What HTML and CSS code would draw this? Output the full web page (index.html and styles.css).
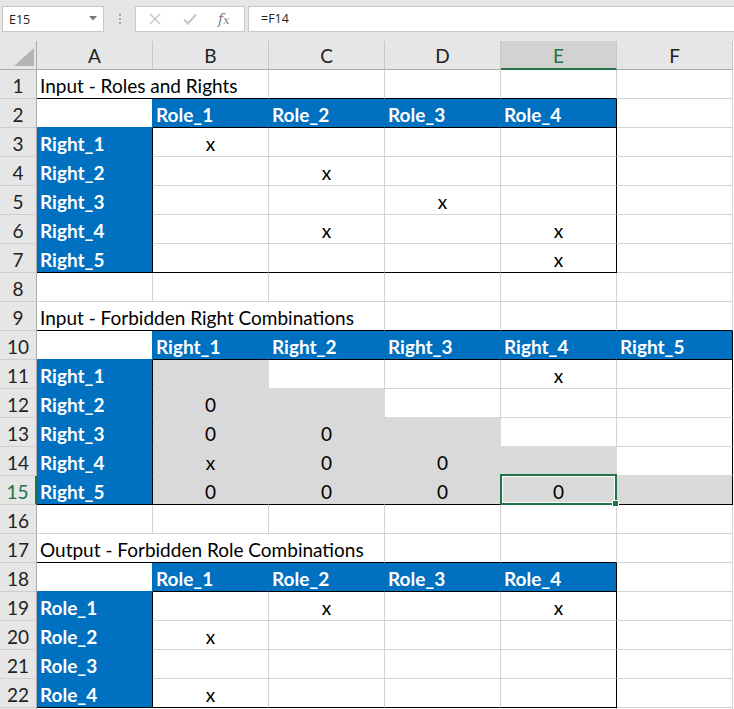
FILE: index.html
```html
<!DOCTYPE html>
<html>
<head>
<meta charset="utf-8">
<link rel="stylesheet" href="styles.css">
</head>
<body>
<div class="app">
  <div class="toolbar">
    <div class="namebox">
      <span class="nb-text">E15</span>
      <svg class="nb-arrow" width="8" height="5" viewBox="0 0 8 5"><path d="M0 0H8L4 4.5Z" fill="#7a7a7a"/></svg>
    </div>
    <div class="dots"><span></span><span></span><span></span></div>
    <div class="fbtns">
      <svg class="ico" width="14" height="14" viewBox="0 0 14 14"><path d="M2 2L12 12M12 2L2 12" stroke="#c4c4c4" stroke-width="1.4" fill="none"/></svg>
      <svg class="ico" width="16" height="14" viewBox="0 0 16 14"><path d="M2 7.5L6 11.5L14 2.5" stroke="#c4c4c4" stroke-width="2" fill="none"/></svg>
      <span class="fx"><i>f</i><span class="fxx">x</span></span>
    </div>
    <div class="formula">=F14</div>
  </div>

  <div class="sheet">
    <div class="corner"><svg width="20" height="18" viewBox="0 0 20 18"><path d="M20 0V18H0Z" fill="#b4b4b4"/></svg></div>
    <div class="ch">A</div><div class="ch">B</div><div class="ch">C</div><div class="ch">D</div><div class="ch sel">E</div><div class="ch">F</div>

    <div class="rh">1</div>
    <div class="c t span2 kb">Input - Roles and Rights</div><div class="c kb"></div><div class="c kb"></div><div class="c kb"></div><div class="c"></div>
    <div class="rh">2</div>
    <div class="c bz"></div><div class="b kb">Role_1</div><div class="b kb">Role_2</div><div class="b kb">Role_3</div><div class="b kb kr">Role_4</div><div class="c"></div>
    <div class="rh">3</div>
    <div class="b kr">Right_1</div><div class="c v">x</div><div class="c v"></div><div class="c v"></div><div class="c v kr"></div><div class="c"></div>
    <div class="rh">4</div>
    <div class="b kr">Right_2</div><div class="c v"></div><div class="c v">x</div><div class="c v"></div><div class="c v kr"></div><div class="c"></div>
    <div class="rh">5</div>
    <div class="b kr">Right_3</div><div class="c v"></div><div class="c v"></div><div class="c v">x</div><div class="c v kr"></div><div class="c"></div>
    <div class="rh">6</div>
    <div class="b kr">Right_4</div><div class="c v"></div><div class="c v">x</div><div class="c v"></div><div class="c v kr">x</div><div class="c"></div>
    <div class="rh">7</div>
    <div class="b kr kb">Right_5</div><div class="c v kb"></div><div class="c v kb"></div><div class="c v kb"></div><div class="c v kr kb">x</div><div class="c"></div>
    <div class="rh">8</div>
    <div class="c"></div><div class="c"></div><div class="c"></div><div class="c"></div><div class="c"></div><div class="c"></div>
    <div class="rh">9</div>
    <div class="c t span3 kb">Input - Forbidden Right Combinations</div><div class="c kb"></div><div class="c kb"></div><div class="c kb"></div>
    <div class="rh">10</div>
    <div class="c bz"></div><div class="b kb">Right_1</div><div class="b kb">Right_2</div><div class="b kb">Right_3</div><div class="b kb">Right_4</div><div class="b kb kr">Right_5</div>
    <div class="rh">11</div>
    <div class="b kr">Right_1</div><div class="g v"></div><div class="c v gb"></div><div class="c v"></div><div class="c v">x</div><div class="c v kr"></div>
    <div class="rh">12</div>
    <div class="b kr">Right_2</div><div class="g v">0</div><div class="g v"></div><div class="c v gb"></div><div class="c v"></div><div class="c v kr"></div>
    <div class="rh">13</div>
    <div class="b kr">Right_3</div><div class="g v">0</div><div class="g v">0</div><div class="g v"></div><div class="c v gb"></div><div class="c v kr"></div>
    <div class="rh">14</div>
    <div class="b kr">Right_4</div><div class="g v">x</div><div class="g v">0</div><div class="g v">0</div><div class="g v"></div><div class="c v kr gb"></div>
    <div class="rh rsel">15</div>
    <div class="b kr kb">Right_5</div><div class="g v kb">0</div><div class="g v kb">0</div><div class="g v kb">0</div><div class="g v kb active">0<span class="selbox"></span><span class="handle"></span></div><div class="g v kb kr"></div>
    <div class="rh">16</div>
    <div class="c"></div><div class="c"></div><div class="c"></div><div class="c"></div><div class="c"></div><div class="c"></div>
    <div class="rh">17</div>
    <div class="c t span3 kb">Output - Forbidden Role Combinations</div><div class="c kb"></div><div class="c kb"></div><div class="c"></div>
    <div class="rh">18</div>
    <div class="c bz"></div><div class="b kb">Role_1</div><div class="b kb">Role_2</div><div class="b kb">Role_3</div><div class="b kb kr">Role_4</div><div class="c"></div>
    <div class="rh">19</div>
    <div class="b kr">Role_1</div><div class="c v"></div><div class="c v">x</div><div class="c v"></div><div class="c v kr">x</div><div class="c"></div>
    <div class="rh">20</div>
    <div class="b kr">Role_2</div><div class="c v">x</div><div class="c v"></div><div class="c v"></div><div class="c v kr"></div><div class="c"></div>
    <div class="rh">21</div>
    <div class="b kr">Role_3</div><div class="c v"></div><div class="c v"></div><div class="c v"></div><div class="c v kr"></div><div class="c"></div>
    <div class="rh">22</div>
    <div class="b kr kb">Role_4</div><div class="c v kb">x</div><div class="c v kb"></div><div class="c v kb"></div><div class="c v kr kb"></div><div class="c"></div>
    <div class="rh"></div>
    <div class="c"></div><div class="c"></div><div class="c"></div><div class="c"></div><div class="c"></div><div class="c"></div>
  </div>
</div>
</body>
</html>
```
FILE: styles.css
```css
* { box-sizing: border-box; }
html, body { margin: 0; padding: 0; background: #fff; }
body { width: 734px; height: 709px; overflow: hidden; font-family: Lato, "Liberation Sans", sans-serif; }

.app { width: 734px; }

.toolbar {
  height: 41px;
  background: #e6e6e6;
  display: flex;
  align-items: flex-start;
  padding-top: 6px;
  padding-left: 2px;
}
.namebox {
  width: 102px;
  height: 26px;
  background: #fff;
  border: 1px solid #c8c8c8;
  display: flex;
  align-items: center;
  justify-content: space-between;
  padding: 0 6px 0 6px;
}
.nb-text { font-family: "Open Sans", sans-serif; font-size: 12.5px; color: #222; }
.nb-arrow { margin-top: -2px; }
.dots {
  width: 31px;
  height: 26px;
  display: flex;
  flex-direction: column;
  align-items: center;
  justify-content: center;
  gap: 2px;
}
.dots span { width: 2px; height: 2px; background: #a8a8a8; display: block; }
.fbtns {
  width: 110px;
  height: 26px;
  background: #fff;
  border: 1px solid #c8c8c8;
  display: flex;
  align-items: center;
  padding-left: 12px;
  gap: 20px;
}
.fx { font-family: "DejaVu Serif", serif; font-size: 14px; color: #7a7a7a; display: flex; align-items: baseline; }
.fx i { font-style: italic; }
.fxx { font-style: italic; font-size: 11px; }
.formula {
  flex: 1;
  height: 26px;
  margin-left: 3px;
  background: #fff;
  border: 1px solid #c8c8c8;
  border-right: none;
  padding-left: 12px;
  font-family: "Open Sans", sans-serif;
  font-size: 12.5px;
  line-height: 24px;
  color: #222;
}

.sheet {
  display: grid;
  grid-template-columns: 37px repeat(6, 116px);
  grid-auto-rows: 29px;
  font-size: 19px;
  color: #000;
}
.sheet > div {
  border-right: 1px solid #d4d4d4;
  border-bottom: 1px solid #d4d4d4;
  padding: 2px 0 0 3px;
  line-height: 27px;
  white-space: nowrap;
}
.corner {
  background: #e6e6e6;
  border-right-color: #ababab !important;
  border-bottom-color: #ababab !important;
  display: flex;
  justify-content: flex-end;
  align-items: flex-end;
  padding: 0 2px 3px 0 !important;
}
.ch {
  background: #e6e6e6;
  border-right-color: #c6c6c6 !important;
  border-bottom-color: #ababab !important;
  text-align: center;
  padding: 1px 0 0 0 !important;
  color: #222;
}
.ch.sel {
  background: #d2d2d2;
  color: #217346;
  border-bottom: 2px solid #217346 !important;
}
.rh {
  background: #e6e6e6;
  border-right-color: #ababab !important;
  border-bottom-color: #cfcfcf !important;
  text-align: center;
  padding: 2px 0 0 0 !important;
  color: #222;
}
.rh.rsel { color: #217346; border-right: 2px solid #217346 !important; }

.c { background: #fff; }
.span2 { grid-column: span 2; }
.span3 { grid-column: span 3; }
.b {
  background: #0070c0;
  border-right-color: #0070c0 !important;
  border-bottom-color: #0070c0 !important;
  color: #fff;
  font-weight: 700;
}
.g {
  background: #d9d9d9;
  border-right-color: #d9d9d9 !important;
  border-bottom-color: #d9d9d9 !important;
}
.bz { border-right-color: #0070c0 !important; border-bottom-color: #0070c0 !important; }
.gb { border-bottom-color: #d9d9d9 !important; }
.v { text-align: center; padding-left: 0 !important; }
.sheet > .kb { border-bottom-color: #000 !important; }
.sheet > .kr { border-right-color: #000 !important; }

.active { position: relative; }
.selbox {
  position: absolute;
  top: -2px; left: -1px; right: -1px; bottom: -1px;
  border: 2px solid #217346;
  box-shadow: inset 0 0 0 1px #fff;
}
.handle {
  position: absolute;
  width: 7px; height: 7px;
  right: -3px; bottom: -3px;
  background: #217346;
  border: 1px solid #fff;
}
```
